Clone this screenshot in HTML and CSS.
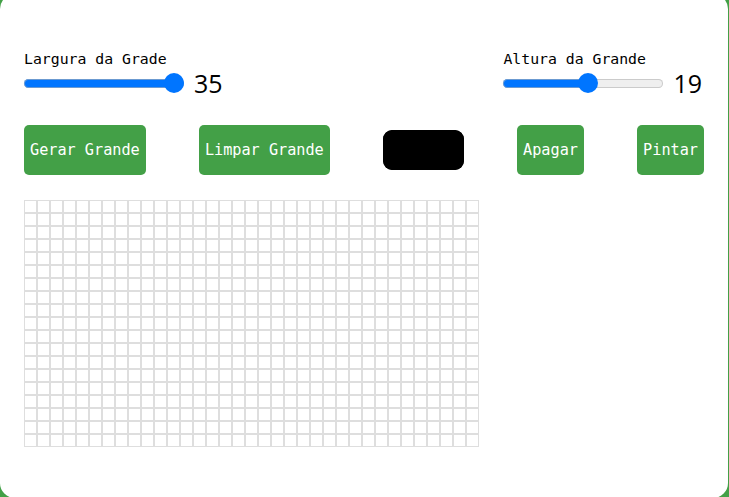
FILE: index.html
```html
<!DOCTYPE html>
<html lang="pt">
<head>
<meta charset="utf-8">
<title>Pixel Art</title>
<link rel="stylesheet" href="styles.css">
</head>
<body>
<main class="card">
  <section class="sliders">
    <div class="slider-group">
      <label class="slider-label" for="largura">Largura da Grade</label>
      <div class="slider-row">
        <input class="range" id="largura" type="range" min="1" max="35" value="35" style="--p:100%">
        <span class="slider-value">35</span>
      </div>
    </div>
    <div class="slider-group">
      <label class="slider-label" for="altura">Altura da Grande</label>
      <div class="slider-row">
        <input class="range" id="altura" type="range" min="1" max="35" value="19" style="--p:53%">
        <span class="slider-value">19</span>
      </div>
    </div>
  </section>
  <section class="actions">
    <button class="btn">Gerar Grande</button>
    <button class="btn">Limpar Grande</button>
    <input class="color" type="color" value="#000000">
    <button class="btn">Apagar</button>
    <button class="btn">Pintar</button>
  </section>
  <div class="grid"></div>
</main>
</body>
</html>
```

FILE: styles.css
```css
html, body {
  margin: 0;
  padding: 0;
  height: 100%;
  overflow: hidden;
}
body {
  background: #43a047;
  font-family: "DejaVu Sans Mono", "Liberation Mono", monospace;
}
.card {
  box-sizing: border-box;
  margin: -6px 0 0 0;
  width: 728px;
  height: 504px;
  padding: 56px 24px 0 24px;
  background: #fff;
  border-radius: 15px;
}
.sliders {
  display: flex;
  justify-content: space-between;
  width: 680px;
}
.slider-group {
  display: flex;
  flex-direction: column;
  gap: 3px;
}
.slider-label {
  font-size: 14.8px;
  line-height: 18px;
  color: #000;
}
.slider-row {
  display: flex;
  align-items: center;
  height: 24px;
  gap: 10px;
}
.slider-value {
  font-family: "Open Sans", "Noto Sans", sans-serif;
  font-size: 25px;
  line-height: 24px;
  padding-right: 2px;
  color: #000;
}
.range {
  -webkit-appearance: none;
  appearance: none;
  margin: 0;
  width: 160px;
  height: 20px;
  background: transparent;
}
.range::-webkit-slider-runnable-track {
  height: 9px;
  border-radius: 5px;
  background: linear-gradient(to right, #0075ff 0 var(--p), #efefef var(--p) 100%);
  box-shadow: inset 0 0 0 1px rgba(178,178,178,0.6);
}
.range::-webkit-slider-thumb {
  -webkit-appearance: none;
  appearance: none;
  width: 20px;
  height: 20px;
  border-radius: 50%;
  background: #0075ff;
  margin-top: -5.5px;
  border: none;
}
.actions {
  display: flex;
  justify-content: space-between;
  align-items: center;
  width: 680px;
  height: 50px;
  margin-top: 30px;
}
.btn {
  height: 50px;
  padding: 0 6px;
  border: none;
  border-radius: 5px;
  background: #43a047;
  color: #fff;
  font-family: "DejaVu Sans Mono", "Liberation Mono", monospace;
  font-size: 15.2px;
}
.color {
  -webkit-appearance: none;
  appearance: none;
  width: 81px;
  height: 40px;
  padding: 0;
  border: none;
  border-radius: 9px;
  background: #000;
}
.color::-webkit-color-swatch-wrapper {
  padding: 0;
}
.color::-webkit-color-swatch {
  border: none;
  border-radius: 9px;
}
.grid {
  margin-top: 25px;
  width: 455px;
  height: 247px;
  background-image:
    repeating-linear-gradient(to right, #dedede 0 1px, transparent 1px 12px, #dedede 12px 13px),
    repeating-linear-gradient(to bottom, #dedede 0 1px, transparent 1px 12px, #dedede 12px 13px);
}
```
